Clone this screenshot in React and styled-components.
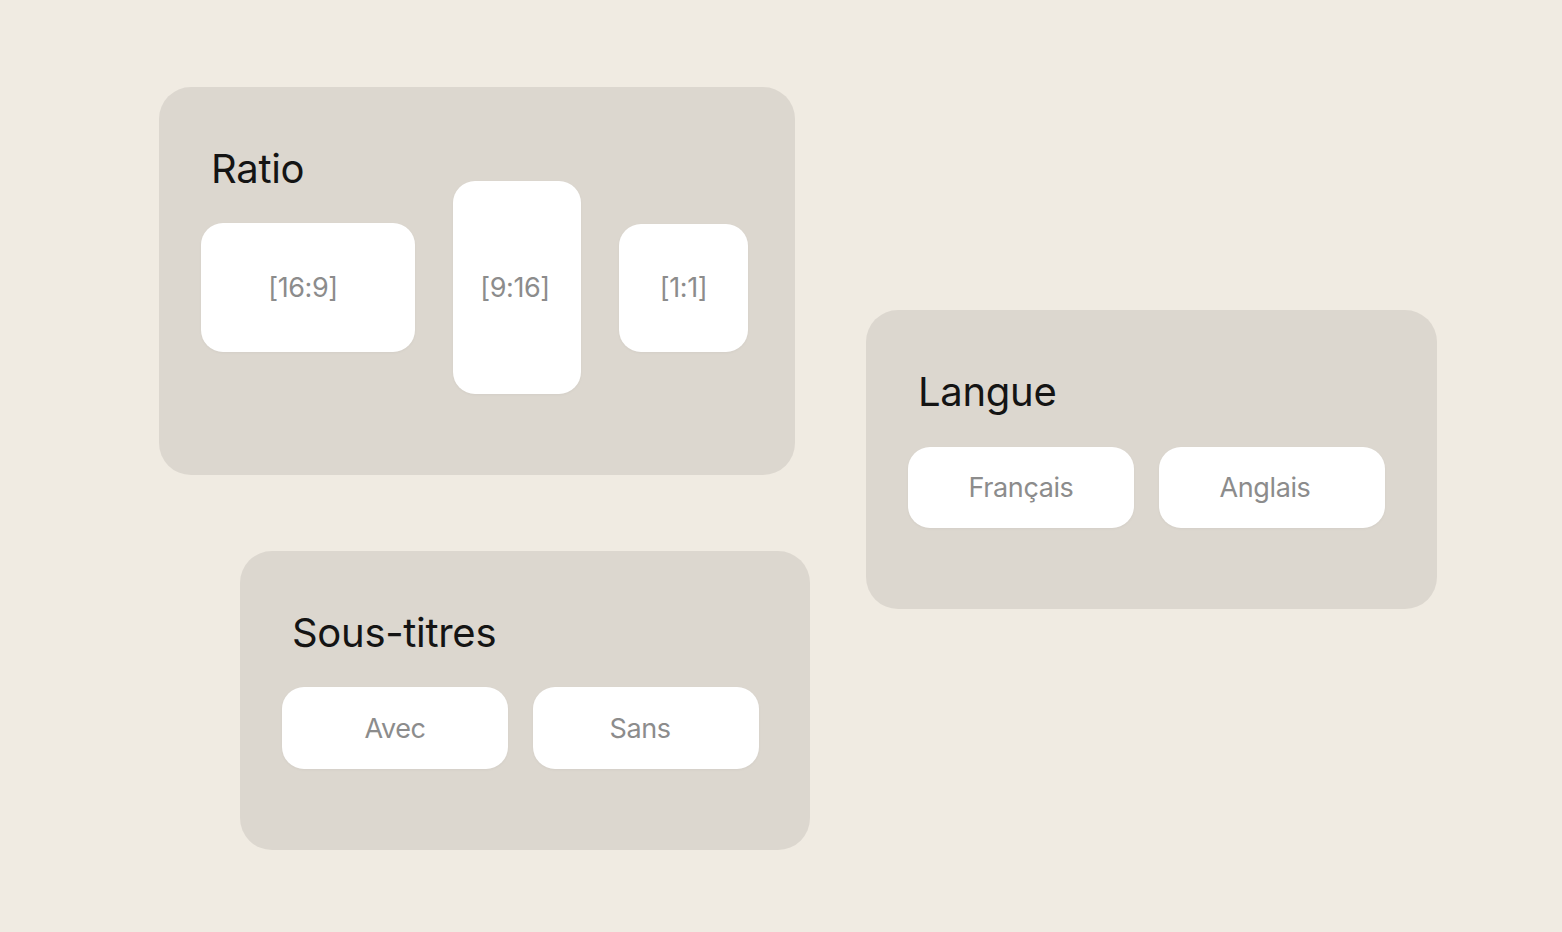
import React from 'react'
import styled, { createGlobalStyle } from 'styled-components'

const Global = createGlobalStyle`
  html, body {
    margin: 0;
    padding: 0;
    background: #f0ebe2;
    font-family: Inter, "Noto Sans", sans-serif;
  }
`

const Page = styled.div`
  width: 1562px;
  height: 932px;
  box-sizing: border-box;
  padding: 87px 0 0 159px;
  display: flex;
  align-items: flex-start;
  gap: 56px;
  background: #f0ebe2;
  overflow: hidden;
`

const Column = styled.div`
  display: flex;
  flex-direction: column;
  align-items: flex-start;
  gap: 76px;
  padding-top: ${(p) => p.$top || 0}px;
`

const Card = styled.section`
  width: ${(p) => p.$w}px;
  height: ${(p) => p.$h}px;
  box-sizing: border-box;
  margin-left: ${(p) => p.$indent || 0}px;
  padding: 58px 42px 0;
  background: #dcd7cf;
  border-radius: 32px;
  display: flex;
  flex-direction: column;
  gap: ${(p) => p.$gap || 30}px;
`

const Title = styled.h2`
  margin: 0 0 0 10px;
  font-size: 40px;
  line-height: 48px;
  font-weight: 400;
  color: #141414;
  letter-spacing: -0.3px;
`

const Row = styled.div`
  display: flex;
  align-items: center;
  gap: ${(p) => p.$gap}px;
  height: ${(p) => p.$h}px;
`

const Option = styled.button`
  width: ${(p) => p.$w}px;
  height: ${(p) => p.$h}px;
  flex: none;
  box-sizing: border-box;
  border: none;
  border-radius: 22px;
  background: #ffffff;
  box-shadow: 0 1px 3px rgba(0, 0, 0, 0.04);
  font-family: Inter, "Noto Sans", sans-serif;
  font-size: 27px;
  font-weight: 400;
  color: #8c8c8c;
  letter-spacing: -0.4px;
  display: flex;
  align-items: center;
  justify-content: center;
  padding: 0 ${(p) => p.$shift || 0}px 0 0;
  cursor: pointer;
`

export default function App() {
  return (
    <>
      <Global />
      <Page>
        <Column>
          <Card $w={636} $h={388}>
            <Title>Ratio</Title>
            <Row $gap={38} $h={129}>
              <Option $w={214} $h={129} $shift={10}>[16:9]</Option>
              <Option $w={128} $h={213} $shift={4}>[9:16]</Option>
              <Option $w={129} $h={128}>[1:1]</Option>
            </Row>
          </Card>
          <Card $w={570} $h={299} $indent={81}>
            <Title>Sous-titres</Title>
            <Row $gap={25} $h={82}>
              <Option $w={226} $h={82}>Avec</Option>
              <Option $w={226} $h={82} $shift={12}>Sans</Option>
            </Row>
          </Card>
        </Column>
        <Column $top={223}>
          <Card $w={571} $h={299} $gap={31}>
            <Title>Langue</Title>
            <Row $gap={25} $h={81}>
              <Option $w={226} $h={81}>Français</Option>
              <Option $w={226} $h={81} $shift={14}>Anglais</Option>
            </Row>
          </Card>
        </Column>
      </Page>
    </>
  )
}
